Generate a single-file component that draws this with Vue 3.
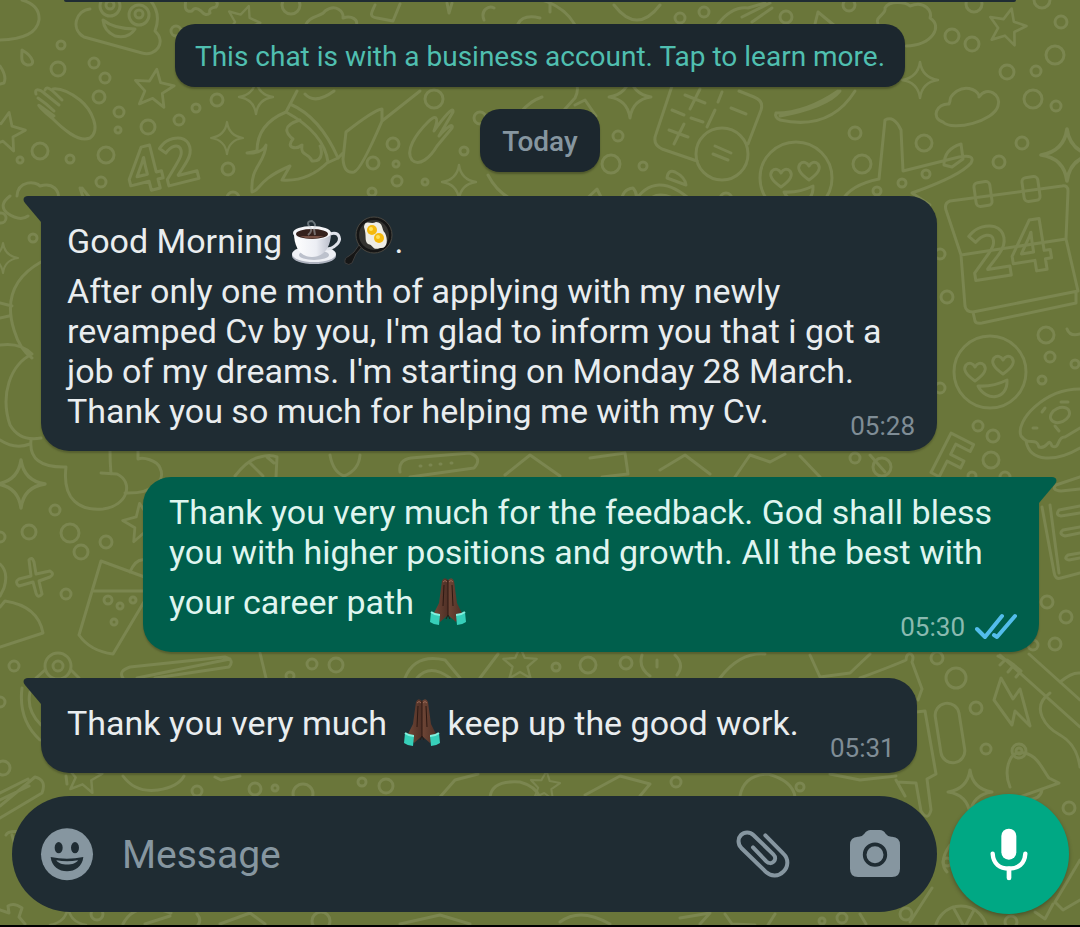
<script setup>
import { ref } from 'vue'

const draft = ref('')

const messages = [
  {
    id: 1,
    mine: false,
    time: '05:28',
    parts: [
      { text: 'Good Morning ' },
      { emoji: 'coffee', label: 'coffee' },
      { emoji: 'pan', label: 'fried eggs' },
      { text: '.\n' },
      { text: "After only one month of applying with my newly revamped Cv by you, I'm glad to inform you that i got a job of my dreams. I'm starting on Monday 28 March. Thank you so much for helping me with my Cv." }
    ]
  },
  {
    id: 2,
    mine: true,
    time: '05:30',
    parts: [
      { text: 'Thank you very much for the feedback. God shall bless you with higher positions and growth. All the best with your career path ' },
      { emoji: 'pray', label: 'folded hands' }
    ]
  },
  {
    id: 3,
    mine: false,
    time: '05:31',
    parts: [
      { text: 'Thank you very much ' },
      { emoji: 'pray', label: 'folded hands' },
      { text: 'keep up the good work.' }
    ]
  }
]

// wallpaper: [x, y, radius]
const dots = [
  [61, 45, 4], [58, 69, 7], [94, 63, 5], [105, 78, 5], [99, 97, 6], [119, 112, 5], [118, 130, 3],
  [148, 127, 7], [179, 120, 5], [196, 108, 4], [217, 100, 6], [40, 151, 8], [70, 159, 4], [106, 155, 8],
  [101, 182, 5], [176, 31, 5], [228, 169, 6], [434, 99, 9], [393, 144, 6], [373, 163, 6], [396, 164, 3],
  [397, 181, 5], [425, 182, 3], [372, 192, 4], [464, 151, 4], [480, 118, 6], [291, 5, 9], [233, 198, 6],
  [680, 18, 5], [704, 12, 5], [786, 17, 6], [849, 5, 6], [952, 36, 7], [972, 44, 7], [974, 4, 8],
  [1042, 0, 8], [1061, 22, 6], [1055, 55, 9], [1007, 72, 7], [1036, 71, 5], [1033, 99, 9], [1056, 106, 5],
  [618, 136, 5], [611, 164, 9], [643, 166, 4], [855, 133, 6], [924, 143, 8], [862, 164, 9], [1022, 143, 6],
  [999, 162, 6], [926, 174, 4], [902, 183, 4], [877, 191, 4], [726, 199, 6], [940, 254, 5], [947, 297, 6],
  [1046, 335, 8], [1050, 357, 5], [1075, 364, 4], [1042, 380, 4], [978, 426, 5], [993, 436, 6], [991, 460, 8],
  [882, 467, 9], [855, 458, 5], [940, 388, 5], [1005, 477, 5], [972, 476, 4], [33, 238, 4], [1, 218, 5],
  [55, 510, 5], [29, 532, 7], [70, 533, 9], [81, 552, 7], [106, 542, 6], [66, 594, 5], [0, 537, 5],
  [14, 666, 5], [0, 702, 5], [3, 768, 7], [108, 600, 4], [120, 606, 3], [133, 600, 3], [114, 622, 3],
  [290, 676, 4], [312, 664, 5], [336, 665, 7], [556, 667, 4], [588, 665, 8], [626, 663, 6],
  [197, 791, 5], [255, 789, 6], [275, 788, 3], [303, 794, 10], [362, 782, 4], [386, 786, 7], [676, 782, 5],
  [800, 787, 4], [937, 658, 6], [956, 678, 10], [976, 708, 6], [986, 749, 5], [1047, 602, 6], [1066, 617, 6],
  [1055, 644, 6], [1033, 645, 5], [1069, 808, 6], [97, 914, 6], [321, 921, 9], [822, 921, 3], [842, 918, 5],
  [906, 914, 6], [1011, 922, 6], [947, 862, 4], [20, 160, 3]
]

// [x, y, scale, rotation]
const stars = [
  [154, 89, 20, 8], [5, 132, 20, 12], [1007, 27, 19, 14], [143, 523, 20, -10], [520, 664, 17, 0],
  [84, 776, 18, 10], [243, 22, 17, 20], [545, 786, 15, 6]
]

const sparkles = [
  [256, 97, 17], [227, 138, 16], [459, 182, 17], [920, 80, 18], [630, 97, 21], [1067, 155, 26],
  [21, 484, 24], [970, 792, 22], [3, 258, 15], [68, 925, 18]
]
</script>

<template>
  <div class="chat">
    <svg class="wallpaper" viewBox="0 0 1080 927" preserveAspectRatio="xMidYMin slice" aria-hidden="true">
      <defs>
        <path id="star" d="M0-1 .28-.36.98-.3.44.16.62.84 0 .47-.62.84-.44.16-.98-.3-.28-.36Z" />
        <path id="sparkle" d="M0-1Q.12-.14 1 0 .12.12 0 1-.12.12-1 0-.12-.14 0-1Z" />
        <path id="heart" d="M0 10C-10 3-12-2-9-6-6-9-2-8 0-4 2-8 6-9 9-6 12-2 10 3 0 10Z" />
        <g id="love">
          <circle r="36" />
          <use href="#heart" x="-15" y="-1" />
          <use href="#heart" x="13" y="-8" />
          <path d="M-12 14Q3 15 17 8C18 28-4 30-12 14Z" />
        </g>
      </defs>

      <circle v-for="(d, i) in dots" :key="'d' + i" :cx="d[0]" :cy="d[1]" :r="d[2]" />
      <use
        v-for="(s, i) in stars"
        :key="'s' + i"
        class="unit"
        href="#star"
        :transform="`translate(${s[0]} ${s[1]}) rotate(${s[3]}) scale(${s[2]})`"
      />
      <use
        v-for="(s, i) in sparkles"
        :key="'p' + i"
        class="unit"
        href="#sparkle"
        :transform="`translate(${s[0]} ${s[1]}) scale(${s[2]})`"
      />

      <!-- top left -->
      <path d="M22 0Q40 5 39 20 36 39 0 40" />
      <path d="M90 9C76 10 70 29 84 37L142 53C156 57 167 42 155 31 160 18 157 8 150 0" />
      <circle cx="110" cy="6" r="10" /><circle cx="110" cy="5" r="4" />
      <circle cx="139" cy="15" r="10" /><circle cx="139" cy="14" r="4" />
      <path d="M103 20Q114 29 135 29 129 39 115 36 104 31 103 20Z" />
      <path d="M22 50C34 57 36 66 27 65 20 63 22 57 22 50ZM0 66Q7 76 4 83L0 84" />
      <path d="M186 0Q183 13 192 11 195 6 201 11 206 17 210 13 208 8 216 7 219 3 215 0" />
      <path d="M305 26C309 15 322 17 325 11 336 3 344 12 343 18 352 15 359 20 356 26" />
      <path d="M375 5C372 12 368 17 377 18L393 21 400 4M447 3 449 13 452 3M484 20C480 10 489 5 494 8M518 24Q523 14 540 18" />
      <path d="M36 94C34 88 40 89 44 93L59 105M45 90C47 85 52 90 62 100M53 89C61 88 72 94 80 100 92 110 101 130 90 138 78 143 62 128 52 118 42 110 36 103 40 106L54 116M38 98Q47 104 54 111" />
      <text x="132" y="195" transform="rotate(-14 132 195)">42</text>
      <path d="M17 196C18 180 36 181 40 186 53 182 60 191 58 199M80 188 84 200M82 188 90 198" />

      <!-- rocket and brush -->
      <path d="M297 91 286 112Q257 124 257 151L247 153Q262 154 266 145C265 164 250 166 252 192 260 191 257 180 290 166L282 180Q308 182 328 162 324 133 286 112M290 104Q320 117 338 158L327 163M305 94Q315 105 334 91" />
      <path d="M300 120C280 126 287 134 293 139 285 148 296 150 302 145 300 157 309 152 312 161 325 162 321 147 320 146" />
      <path d="M420 91 382 121 382 109Q374 110 346 132L343 159Q344 174 354 172 361 170 382 121M338 158 343 153" />
      <path d="M428 122C415 135 405 151 412 160 419 167 430 158 437 146L452 128C454 122 446 128 439 136L453 112C454 105 443 118 434 131 440 115 435 115 428 122Z" />
      <path d="M521 112Q530 101 542 97M488 175Q497 193 515 201M542 0Q565 7 575 25M550 0V12M565 75Q583 82 575 98L555 120M575 105 585 100 596 116" />

      <!-- top right -->
      <path d="M614 5Q637 35 660 5M718 24Q732 6 748 8L765 3M742 17 770 3M752 22 772 8M815 24 818 12Q830 22 835 26" />
      <path d="M878 24C874 17 887 14 885 8 889 0 906 2 910 6 925 0 933 12 930 18 943 26 933 45 906 46" />
      <path d="M672 86 656 134Q652 144 662 149L697 161M739 91 754 97Q764 101 761 110L748 144" />
      <circle cx="722" cy="154" r="26" />
      <path d="M685 95 705 103M700 89 690 109M669 130 688 137M684 124 674 144M672 110 684 115M691 118 703 122M722 92 718 102M715 110 707 127M731 108 746 114M715 146 731 153M713 154 728 160" />
      <path d="M776 113C800 113 822 102 838 91M776 113Q774 117 780 120 830 131 855 91M840 91Q827 107 780 116" />
      <path d="M943 122C930 118 937 103 949 104 952 98 947 99 957 91 968 84 980 92 979 97 987 85 1002 95 998 106 994 121 953 132 943 122Z" />
      <use href="#love" x="796" y="178" />
      <path d="M842 201Q850 185 879 179L885 120Q894 115 901 130L903 171 959 157Q976 154 971 163 960 176 912 193L930 205M944 165Q944 149 961 144L963 159 952 167Z" />
      <path d="M621 203Q622 189 633 188 640 196 632 203M667 178Q668 169 675 172 685 177 686 185L667 178ZM633 204Q655 167 693 202M645 204Q658 186 682 204M581 204 597 189 604 203" />

      <!-- calendar -->
      <path d="M961 255 946 210Q944 203 950 201L1062 186Q1068 185 1068 191L1066 239 961 255 965 306Q966 312 973 312L1078 291 1066 239M973 312 975 321Q976 324 982 323L1076 303V292" />
      <rect x="975" y="182" width="16" height="24" rx="4" transform="rotate(-8 983 194)" />
      <rect x="1023" y="177" width="16" height="24" rx="4" transform="rotate(-8 1031 189)" />
      <text x="973" y="281" transform="rotate(-9 973 281)" class="big">24</text>
      <use href="#love" x="990" y="372" />
      <path d="M1080 389C1044 389 1015 421 1021 436 1029 447 1036 436 1039 447 1048 450 1048 436 1052 446 1060 450 1057 436 1065 437L1080 428M1026 441C1030 463 1056 462 1080 448M1067 329Q1070 337 1080 334" />
      <ellipse cx="1060" cy="415" rx="10" ry="7" transform="rotate(-25 1060 415)" />
      <path d="M1042 412 1045 408M1033 428H1037M1055 426 1059 431M1061 402H1068" />
      <text x="926" y="470" transform="rotate(27 926 470)">F</text>

      <!-- left side -->
      <path d="M10 196Q-2 205 7 213 20 222 28 216M41 262Q0 285 14 330 20 350 32 358M0 303 12 306M0 318 9 316M0 345Q20 342 32 354C10 365 0 395 10 425Q20 442 41 438M0 440Q15 450 30 444" />
      <path d="M31 440Q28 468 66 467C62 500 80 511 103 509 128 506 134 482 117 474L101 473M111 474Q110 462 110 451M125 493C154 494 166 480 160 468 157 460 143 457 138 459V451" />
      <path d="M29 560Q32 556 34 562L36 574 50 571Q55 574 50 577L39 581 42 594Q38 599 36 593L33 582 19 586Q14 582 19 579L31 576Z" />
      <path d="M0 564Q9 572 4 588L0 596M0 607 5 601Q38 606 43 633L0 647M101 561 79 635Q90 651 113 654L160 575M101 561 150 579M93 591H150M130 572Q136 558 145 560" />
      <path d="M235 476Q248 459 260 457 270 454 277 457L276 477M250 463 263 476M267 457 274 463M330 455Q333 472 344 476 359 470 360 455M400 472Q398 460 411 458L470 453Q483 458 474 468L410 477M420 466H421M430 465H431M440 464H441M451 463H452" />
      <path d="M505 475 530 455 560 476M590 458 625 453 628 474 602 477M660 470 685 455 710 474M735 477 750 455 770 462 785 454M800 456 820 477M885 472 870 455" />

      <!-- between the bubbles -->
      <circle cx="58" cy="666" r="13" /><circle cx="58" cy="666" r="5" />
      <path d="M45 670 36 678M71 670 79 678M123 678Q118 671 130 667L225 657Q235 660 229 667L155 678M137 678 230 659M260 653 266 678" />
      <path d="M22 688Q18 720 40 740M30 692Q26 710 41 725M405 678Q415 653 445 660L460 678M417 678Q430 663 450 678M480 678 498 654M642 655Q638 668 650 676M657 660V667M675 655Q685 665 677 675M720 678Q740 652 765 654M810 655 820 677 850 673 870 654M860 678Q895 665 906 660C906 650 916 653 912 662L922 689 918 700" />
      <path d="M0 806 35 777Q47 780 42 793L0 818M0 793 28 779M0 800 29 786M66 776 67 784M123 776Q135 793 158 790 178 787 184 776M215 777 221 780 240 776M440 797 455 780 478 774M490 797Q492 780 520 782 535 786 540 797M585 795 620 776 650 784 640 796M740 796Q744 775 768 774 793 781 795 797M830 774 860 780 896 776" />

      <!-- right side -->
      <path d="M1042 507 1054 572Q1055 580 1061 578L1080 573M1050 505 1059 573M1080 477 1056 485Q1051 490 1061 491L1080 489M1080 506 1059 510Q1055 515 1061 516L1080 513M1080 527 1063 530Q1058 534 1065 536L1080 533M1080 553 1068 555Q1063 559 1069 560L1080 558" />
      <path d="M1001 678 994 700 1012 725 1015 711 1030 726 1020 689 1013 699Z" />
      <path d="M1010 787C1003 770 1010 755 1017 753 1036 750 1042 769 1049 778L1059 783 1011 800M1020 799Q1040 802 1042 790" />
      <circle cx="1019" cy="751" r="7" /><circle cx="1019" cy="751" r="3" />
      <path d="M1000 655 1080 727M1029 654 1080 700M1060 682Q1072 672 1080 673M1050 693C1029 708 1047 728 1060 735 1071 741 1078 753 1080 767M998 656 1005 660 1000 665M1007 660 1014 665 1008 672M1015 666 1021 671 1016 677" />
      <rect x="938" y="703" width="24" height="60" rx="12" transform="rotate(-9 950 733)" />
      <path d="M916 712 925 711 936 774 927 779 931 810Q928 822 921 811L916 783 897 782M905 796 896 780" />

      <!-- under the composer -->
      <path d="M12 835 28 890M6 835Q8 830 22 832M0 910 9 913 8 906Q14 902 22 908L19 917 25 924M123 924Q135 900 171 913M145 924 170 916M197 914Q202 920 198 925M220 924 250 913 265 924M400 924 440 915 470 924M560 922Q580 907 610 924M680 918 710 913 700 924M725 914 732 924 755 925M775 914 768 925M860 914 866 924M910 922 932 888" />
      <circle cx="961" cy="932" r="26" />
      <path d="M936 928 986 928M953 907 963 925M974 910 966 925M1055 902 1080 860M1055 902 1063 910 1080 900M1035 912 1045 919 1053 904M950 845Q938 862 947 872" />
    </svg>

    <div class="previous"></div>

    <button type="button" class="pill notice">This chat is with a business account. Tap to learn more.</button>
    <div class="pill day">Today</div>

    <main class="messages">
      <article v-for="m in messages" :key="m.id" class="bubble" :class="m.mine ? 'out' : 'in'">
        <svg class="tail" viewBox="0 0 20 27" aria-hidden="true">
          <path d="M20 0H5C1 0-1 3 2 7L18 26H20Z" />
        </svg>
        <p class="body"><template v-for="(p, i) in m.parts" :key="i"><template v-if="p.text">{{ p.text }}</template><svg v-else class="emoji" viewBox="0 0 52 60" role="img" :aria-label="p.label"><use :href="'#emoji-' + p.emoji" /></svg></template><span class="spacer"></span></p>
        <div class="meta">
          <time>{{ m.time }}</time>
          <svg v-if="m.mine" class="ticks" viewBox="0 0 42 28" role="img" aria-label="Read">
            <path d="M2 16 10 24 27 3M19 22 22 24 40 3" />
          </svg>
        </div>
      </article>
    </main>

    <form class="composer" @submit.prevent>
      <div class="field">
        <button type="button" class="icon" aria-label="Emoji">
          <svg width="54" height="53" viewBox="120 129 162 159">
            <circle cx="201" cy="208" r="78" fill="#8696a0" />
            <ellipse cx="176" cy="188" rx="12" ry="17" fill="#1f2c33" />
            <ellipse cx="225" cy="188" rx="12" ry="17" fill="#1f2c33" />
            <path d="M152 216Q201 227 250 216C247 245 225 259 201 259S155 245 152 216Z" fill="#1f2c33" />
            <path d="M169 226Q201 232 234 226C226 243 177 243 169 226Z" fill="#8696a0" />
          </svg>
        </button>
        <input v-model="draft" type="text" placeholder="Message" aria-label="Message" />
        <button type="button" class="icon attach" aria-label="Attach">
          <svg width="56" height="52" viewBox="105 130 168 156" fill="none" stroke="#8696a0" stroke-width="12" stroke-linecap="round">
            <path d="M196 152 250 207C267 223 265 247 250 261C236 276 213 276 199 263L124 190C112 177 114 160 123 151C133 141 150 141 160 151L220 209C228 217 226 226 221 231C215 237 206 237 199 230L159 188" />
          </svg>
        </button>
        <button type="button" class="icon" aria-label="Camera">
          <svg width="54" height="50" viewBox="444 129 162 150">
            <path d="M474 152Q486 153 493 143 501 132 511 132H540Q550 132 557 143 564 153 576 152 600 153 600 177V248Q600 273 576 273H474Q450 273 450 248V177Q450 153 474 152Z" fill="#8696a0" />
            <circle cx="525" cy="206" r="31" fill="none" stroke="#1f2c33" stroke-width="11" />
          </svg>
        </button>
      </div>
      <button type="button" class="mic" aria-label="Record voice message">
        <svg width="40" height="55" viewBox="869 126 120 165">
          <rect x="906" y="131" width="45" height="93" rx="22" fill="#fff" />
          <path d="M880 206C882 238 902 251 929 251S976 238 978 206" fill="none" stroke="#fff" stroke-width="13" stroke-linecap="round" />
          <path d="M929 251V279" fill="none" stroke="#fff" stroke-width="14" stroke-linecap="round" />
        </svg>
      </button>
    </form>

    <svg class="sprites" aria-hidden="true">
      <defs>
        <linearGradient id="cup" x1="0" x2="1" y1="0" y2="0">
          <stop offset="0" stop-color="#fff" />
          <stop offset=".6" stop-color="#eceef4" />
          <stop offset="1" stop-color="#b9bdca" />
        </linearGradient>
        <linearGradient id="skin" x1="0" x2="1" y1="0" y2="0">
          <stop offset="0" stop-color="#6f4636" />
          <stop offset="1" stop-color="#4f3026" />
        </linearGradient>
        <symbol id="emoji-coffee" viewBox="0 0 52 60">
          <ellipse cx="23" cy="45" rx="22" ry="8" fill="#aeb3bf" />
          <ellipse cx="23" cy="43" rx="22" ry="8" fill="#eef0f5" />
          <ellipse cx="23" cy="44" rx="15" ry="5" fill="#bcc1cc" />
          <path d="M39 23C49 20 51 29 45 34 42 37 38 38 35 38" fill="none" stroke="#dfe2ea" stroke-width="3" />
          <path d="M3 22C3 37 10 46 21 46S40 37 40 22Z" fill="url(#cup)" />
          <ellipse cx="21" cy="22" rx="19" ry="7" fill="#f4f5f8" />
          <ellipse cx="21" cy="23" rx="16" ry="5" fill="#35211c" />
          <path d="M9 25Q20 30 33 25 21 25 9 25Z" fill="#765044" />
          <path d="M17 24Q23 19 18 15 15 10 21 10 26 13 23 18L24 24" fill="none" stroke="#c4cbd1" stroke-width="2" opacity=".45" />
        </symbol>
        <symbol id="emoji-pan" viewBox="0 0 52 60">
          <path d="M19 36 13 43 9 52Q6 55 2 52 1 47 6 45L11 41 16 34Z" fill="#161616" stroke="#3d3d3d" stroke-width="1" />
          <circle cx="31" cy="24" r="18" fill="#151515" stroke="#4a4842" stroke-width="1" />
          <circle cx="31" cy="24" r="15" fill="#343330" />
          <path d="M21 16C22 8 28 14 33 11 41 12 38 18 42 22 45 28 45 38 37 37 29 40 31 34 25 33 21 30 24 25 21 16Z" fill="#eeece4" />
          <circle cx="29" cy="19" r="5" fill="#f5b90d" />
          <circle cx="36" cy="27" r="5" fill="#f5b90d" />
          <circle cx="28" cy="18" r="2" fill="#ffe15a" />
          <circle cx="35" cy="26" r="2" fill="#ffe15a" />
        </symbol>
        <symbol id="emoji-pray" viewBox="0 0 52 60">
          <path d="M20 9Q22 4 26 8V43L18 50 12 41 17 31Z" fill="url(#skin)" />
          <path d="M26 8Q30 4 32 9L35 31 40 41 34 50 26 43Z" fill="url(#skin)" />
          <path d="M26 8V43L24 47M26 43 28 47M22 13 21 34M30 13 31 34" fill="none" stroke="#2c1812" stroke-width="1" />
          <path d="M21 10Q23 7 25 10M27 10Q29 7 31 10" fill="none" stroke="#9a6957" stroke-width="1" />
          <path d="M9 40Q13 43 18 43L17 53Q12 53 8 50Z" fill="#37cfb9" />
          <path d="M43 40Q39 43 34 43L35 53Q40 53 44 50Z" fill="#37cfb9" />
          <path d="M9 40Q13 43 18 43M43 40Q39 43 34 43" fill="none" stroke="#83efdd" stroke-width="2" />
        </symbol>
      </defs>
    </svg>
  </div>
</template>

<style>
body {
  margin: 0;
  background: #6a763a;
}
</style>

<style scoped>
.chat {
  position: relative;
  isolation: isolate;
  display: flex;
  flex-direction: column;
  align-items: center;
  min-height: 100vh;
  box-sizing: border-box;
  border-bottom: 2px solid #000;
  background: #6a763a;
  font-family: Roboto, "Liberation Sans", sans-serif;
  overflow: hidden;
}
.wallpaper {
  position: absolute;
  inset: 0;
  z-index: -1;
  width: 100%;
  height: 100%;
  fill: none;
  stroke: #7b8650;
  stroke-width: 3;
  stroke-linecap: round;
  stroke-linejoin: round;
}
.wallpaper .unit {
  stroke-width: 0.14;
}
.wallpaper text {
  font-family: "Open Sans", sans-serif;
  font-size: 62px;
  font-weight: 700;
}
.wallpaper .big {
  font-size: 72px;
}
.sprites {
  position: absolute;
  width: 0;
  height: 0;
}
button {
  border: 0;
  padding: 0;
  background: none;
  font-family: inherit;
  cursor: pointer;
}
.previous {
  align-self: stretch;
  height: 2px;
  margin: 0 64px 22px;
  border-radius: 0 0 16px 16px;
  background: #1f2c33;
}
.pill {
  box-sizing: border-box;
  padding: 13px 22px 11px;
  border-radius: 20px;
  background: #1c272e;
  box-shadow: 0 2px 2px rgba(0, 0, 0, 0.25);
  font-size: 28px;
  line-height: 39px;
}
.notice {
  margin-bottom: 22px;
  padding: 13px 20px 11px;
  color: #50bfb0;
}
.day {
  margin-bottom: 24px;
  color: #8696a0;
  font-weight: 500;
}
.messages {
  display: flex;
  flex-direction: column;
  align-self: stretch;
  gap: 26px;
  padding: 0 41px;
}
.bubble {
  position: relative;
  box-sizing: border-box;
  max-width: 896px;
  padding: 15px 26px 20px;
  border-radius: 28px;
  box-shadow: 0 2px 2px rgba(0, 0, 0, 0.2);
}
.in {
  align-self: flex-start;
  border-top-left-radius: 0;
  background: #1f2c33;
  color: #e9edef;
}
.out {
  align-self: flex-end;
  border-top-right-radius: 0;
  background: #005f4c;
  color: #dff5ef;
}
.tail {
  position: absolute;
  top: 0;
  left: -18px;
  width: 20px;
  height: 27px;
  fill: #1f2c33;
}
.out .tail {
  right: -18px;
  left: auto;
  transform: scaleX(-1);
  fill: #005f4c;
}
.body {
  margin: 0;
  font-size: 34px;
  line-height: 40px;
  white-space: pre-wrap;
}
.emoji {
  width: 52px;
  height: 60px;
  vertical-align: -18px;
}
.spacer {
  display: inline-block;
  width: 92px;
}
.meta {
  position: absolute;
  right: 22px;
  bottom: 10px;
  display: flex;
  align-items: center;
  gap: 10px;
  color: #7f8d96;
  font-size: 26px;
  line-height: 30px;
}
.out .meta {
  color: #8abab0;
}
.ticks {
  width: 42px;
  height: 28px;
  fill: none;
  stroke: #53bdeb;
  stroke-width: 4;
  stroke-linecap: round;
  stroke-linejoin: round;
}
.composer {
  display: flex;
  align-self: stretch;
  align-items: center;
  gap: 12px;
  margin-top: auto;
  padding: 21px 11px 11px 12px;
}
.field {
  display: flex;
  flex: 1;
  align-items: center;
  min-width: 0;
  height: 116px;
  box-sizing: border-box;
  padding: 0 35px 0 28px;
  border-radius: 58px;
  background: #1f2c33;
}
.icon {
  display: flex;
  flex: none;
}
.attach {
  margin-right: 57px;
}
input {
  flex: 1;
  min-width: 0;
  margin: 0 28px;
  padding: 2px 0 0;
  border: 0;
  outline: 0;
  background: none;
  color: #e9edef;
  font-family: inherit;
  font-size: 39px;
  line-height: 48px;
}
input::placeholder {
  color: #8696a0;
  opacity: 1;
}
.mic {
  display: flex;
  flex: none;
  align-items: center;
  justify-content: center;
  width: 120px;
  height: 120px;
  border-radius: 50%;
  background: #00a884;
  box-shadow: 0 2px 4px rgba(0, 0, 0, 0.3);
}
</style>
